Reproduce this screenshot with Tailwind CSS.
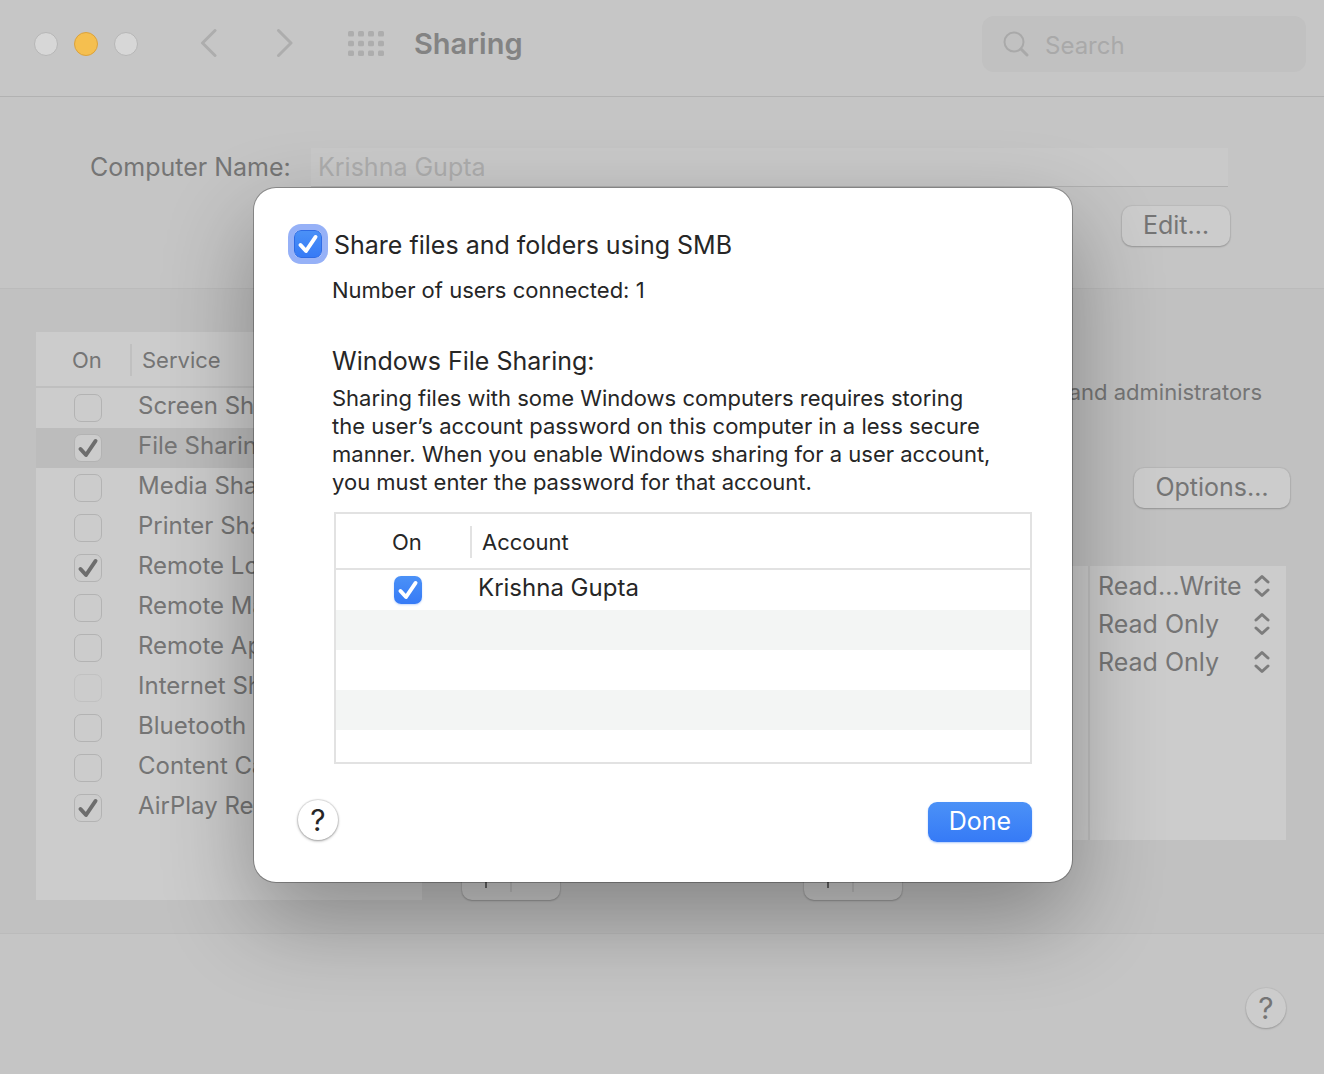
<!DOCTYPE html>
<html lang="en">
<head>
<meta charset="utf-8">
<meta name="viewport" content="width=device-width, initial-scale=1">
<title>Sharing</title>
<script src="https://cdn.jsdelivr.net/npm/@tailwindcss/browser@4"></script>
</head>
<body class="relative flex min-h-screen flex-col overflow-x-hidden bg-[#c5c5c5] font-[Inter,sans-serif] text-[25px] text-[#757575]">

<!-- Toolbar -->
<header class="flex h-[97px] shrink-0 items-start border-b border-[#b2b2b2] bg-[#c6c6c6] pt-4 pr-[18px] pl-[34px]">
  <div class="flex h-14 items-center">
    <div class="flex gap-4">
      <button aria-label="Close" class="size-6 rounded-full border border-[#b6b6b6] bg-[#d7d7d7]"></button>
      <button aria-label="Minimize" class="size-6 rounded-full border border-[#dba23c] bg-[#f5bf4f]"></button>
      <button aria-label="Zoom" class="size-6 rounded-full border border-[#b6b6b6] bg-[#d7d7d7]"></button>
    </div>
    <button aria-label="Back" class="ml-[60px]"><svg class="h-[30px] w-5" viewBox="0 0 20 30" fill="none" stroke="#adadad" stroke-width="3" stroke-linecap="round" stroke-linejoin="round"><path d="M17 1.500 4.500 14 17 26.500"/></svg></button>
    <button aria-label="Forward" class="ml-14"><svg class="h-[30px] w-5" viewBox="0 0 20 30" fill="none" stroke="#adadad" stroke-width="3" stroke-linecap="round" stroke-linejoin="round"><path d="M4.500 1.500 17 14 4.500 26.500"/></svg></button>
    <button aria-label="Show All" class="ml-[54px]"><svg class="h-[26px] w-9" viewBox="0 0 36 26" fill="#adadad"><g id="r"><rect x="0" y="0" width="6" height="5.500" rx="1.500"/><rect x="10" y="0" width="6" height="5.500" rx="1.500"/><rect x="20" y="0" width="6" height="5.500" rx="1.500"/><rect x="30" y="0" width="6" height="5.500" rx="1.500"/></g><use href="#r" y="9.700"/><use href="#r" y="19.400"/></svg></button>
    <h1 class="ml-[30px] text-[29px] leading-8 font-semibold text-[#838383]">Sharing</h1>
  </div>
  <label class="ml-auto flex h-14 w-[324px] items-center gap-4 rounded-xl bg-[#c1c1c1] pl-[21px]">
    <svg class="size-[26px] shrink-0" viewBox="0 0 26 26" fill="none" stroke="#a9a9a9" stroke-linecap="round"><circle cx="11" cy="11" r="9.500" stroke-width="2"/><path d="m18 18 6 6" stroke-width="3"/></svg>
    <input type="text" aria-label="Search" placeholder="Search" class="w-full min-w-0 bg-transparent pt-1 text-2xl text-[#757575] outline-none placeholder:text-[#a9a9a9]">
  </label>
</header>

<!-- Computer name -->
<section class="flex h-48 shrink-0 flex-col border-b border-[#bbbbbb] pt-[51px] pr-[94px] pl-[90px]">
  <div class="mr-[2px] flex h-[39px] items-center">
    <label for="computer-name" class="w-[221px] shrink-0">Computer Name:</label>
    <input id="computer-name" type="text" value="Krishna Gupta" disabled class="h-full min-w-0 flex-1 border-b border-[#b0b0b0] bg-[#c9c9c9] pl-[7px] text-[#adadad]">
  </div>
  <button class="mt-[19px] h-10 w-[108px] self-end rounded-[10px] bg-[#cccccc] shadow-[0_0_1px_1px_rgba(0,0,0,0.05),0_1px_2px_rgba(0,0,0,0.2)]">Edit…</button>
</section>

<!-- Services and file sharing settings -->
<main class="flex h-[645px] shrink-0 gap-10 border-b border-[#bbbbbb] bg-[#c1c1c1] pt-[43px] pb-[33px] pl-9">
  <div class="w-[386px] shrink-0 bg-[#cccccc]">
    <table class="w-full table-fixed border-separate border-spacing-0 text-left">
      <colgroup><col class="w-24"><col></colgroup>
      <thead class="text-[22px]">
        <tr>
          <th class="h-14 border-b-2 border-[#bfbfbf] p-0 pt-[2px] font-normal"><div class="h-8 border-r-2 border-[#c0c0c0] pl-9 leading-8">On</div></th>
          <th class="h-14 border-b-2 border-[#bfbfbf] p-0 pt-[2px] pl-[10px] font-normal">Service</th>
        </tr>
      </thead>
      <tbody id="services" class="text-2xl"></tbody>
    </table>
  </div>

  <div class="flex min-w-0 flex-1 flex-col">
    <p class="mt-[46px] mr-[62px] self-end text-[22px] leading-7 whitespace-nowrap">and administrators</p>
    <button class="mt-[62px] mr-[34px] h-10 w-[156px] self-end rounded-[10px] bg-[#cccccc] shadow-[0_0_1px_1px_rgba(0,0,0,0.05),0_1px_2px_rgba(0,0,0,0.2)]">Options…</button>
    <div class="mt-[58px] mr-[38px] flex h-[274px] gap-5">
      <div class="w-[322px] shrink-0 bg-[#cccccc]"></div>
      <div class="flex min-w-0 flex-1 bg-[#cccccc]">
        <div class="flex-1 border-r-2 border-[#bfbfbf]"></div>
        <div id="permissions" class="w-[196px] shrink-0 pt-[1px]"></div>
      </div>
    </div>
    <div class="mt-5 flex gap-[244px]">
      <div class="flex h-10 w-[98px] shrink-0 items-center rounded-[10px] bg-[#cccccc] shadow-[0_0_1px_1px_rgba(0,0,0,0.05),0_1px_2px_rgba(0,0,0,0.2)]">
        <button aria-label="Add folder" class="flex h-6 flex-1 justify-center border-r-2 border-[#bcbcbc] pt-1"><svg class="size-4" viewBox="0 0 16 16" stroke="#666666" stroke-width="2"><path d="M8 0v16M0 8h16"/></svg></button>
        <button aria-label="Remove folder" class="flex h-6 flex-1 justify-center pt-1"><svg class="size-4" viewBox="0 0 16 16" stroke="#666666" stroke-width="2"><path d="M0 8h16"/></svg></button>
      </div>
      <div class="flex h-10 w-[98px] shrink-0 items-center rounded-[10px] bg-[#cccccc] shadow-[0_0_1px_1px_rgba(0,0,0,0.05),0_1px_2px_rgba(0,0,0,0.2)]">
        <button aria-label="Add user" class="flex h-6 flex-1 justify-center border-r-2 border-[#bcbcbc] pt-1"><svg class="size-4" viewBox="0 0 16 16" stroke="#666666" stroke-width="2"><path d="M8 0v16M0 8h16"/></svg></button>
        <button aria-label="Remove user" class="flex h-6 flex-1 justify-center pt-1"><svg class="size-4" viewBox="0 0 16 16" stroke="#666666" stroke-width="2"><path d="M0 8h16"/></svg></button>
      </div>
    </div>
  </div>
</main>

<footer class="flex justify-end pt-[54px] pr-[38px]">
  <button aria-label="Help" class="flex size-10 items-center justify-center rounded-full bg-[#cccccc] shadow-[0_0_1px_1px_rgba(0,0,0,0.04),0_1px_2px_rgba(0,0,0,0.2)]"><span class="text-[30px] leading-10">?</span></button>
</footer>

<!-- Sharing options sheet -->
<div class="absolute inset-x-0 top-[188px] flex justify-center pl-[2px]">
  <div role="dialog" aria-label="File sharing options" class="w-[818px] rounded-[22px] bg-white pt-9 pr-10 pb-10 pl-[34px] text-[#262626] shadow-[0_0_0_1px_rgba(0,0,0,0.28),0_36px_90px_rgba(0,0,0,0.32)]">
    <div class="flex h-10 items-center gap-3 pl-[6px]">
      <span class="grid size-7 shrink-0">
        <input id="smb" type="checkbox" checked class="col-start-1 row-start-1 size-7 appearance-none rounded-[7px] border border-[#2f6ce5] bg-linear-to-b from-[#4b91f7] to-[#367af6] ring-6 ring-[#96b1f7]">
        <svg class="pointer-events-none col-start-1 row-start-1 size-7" viewBox="0 0 28 28" fill="none" stroke="#fff" stroke-width="4" stroke-linecap="round" stroke-linejoin="round"><path d="m6.500 15 5.500 6 9.500-14"/></svg>
      </span>
      <label for="smb" class="pt-[3px]">Share files and folders using SMB</label>
    </div>
    <div class="pl-11">
      <p class="mt-3 text-[22px] leading-7">Number of users connected: 1</p>
      <h2 class="mt-[37px] leading-10">Windows File Sharing:</h2>
      <p class="mt-[3px] text-[22px] leading-7 whitespace-nowrap">Sharing files with some Windows computers requires storing<br>the user’s account password on this computer in a less secure<br>manner. When you enable Windows sharing for a user account,<br>you must enter the password for that account.</p>
    </div>
    <div class="mt-4 ml-[46px] h-[252px] overflow-hidden border-2 border-[#e2e2e2]">
      <table class="w-full table-fixed border-separate border-spacing-0 text-left">
        <colgroup><col class="w-[136px]"><col></colgroup>
        <thead class="text-[22px]">
          <tr>
            <th class="h-14 border-b-2 border-[#e2e2e2] p-0 pt-[2px] font-normal"><div class="h-8 border-r-2 border-[#e2e2e2] pl-14 leading-8">On</div></th>
            <th class="h-14 border-b-2 border-[#e2e2e2] p-0 pt-[2px] pl-[10px] font-normal">Account</th>
          </tr>
        </thead>
        <tbody class="text-2xl">
          <tr>
            <td class="h-10 p-0 pl-[58px]">
              <span class="grid size-7">
                <input id="account" type="checkbox" checked class="col-start-1 row-start-1 size-7 appearance-none rounded-[7px] bg-linear-to-b from-[#4b91f7] to-[#367af6] shadow-[0_1px_2px_rgba(54,122,246,0.3)]">
                <svg class="pointer-events-none col-start-1 row-start-1 size-7" viewBox="0 0 28 28" fill="none" stroke="#fff" stroke-width="4" stroke-linecap="round" stroke-linejoin="round"><path d="m6.500 15 5.500 6 9.500-14"/></svg>
              </span>
            </td>
            <td class="h-10 p-0 pb-1 pl-[6px] leading-9"><label for="account">Krishna Gupta</label></td>
          </tr>
          <tr><td colspan="2" class="h-10 bg-[#f3f5f4] p-0"></td></tr>
          <tr><td colspan="2" class="h-10 p-0"></td></tr>
          <tr><td colspan="2" class="h-10 bg-[#f3f5f4] p-0"></td></tr>
        </tbody>
      </table>
    </div>
    <div class="mt-9 flex items-start justify-between pl-[10px]">
      <button aria-label="Help" class="flex size-10 items-center justify-center rounded-full bg-white shadow-[0_0_1px_1px_rgba(0,0,0,0.1),0_1px_3px_rgba(0,0,0,0.35)]"><span class="text-[30px] leading-10">?</span></button>
      <button class="mt-[2px] h-10 w-[104px] rounded-[9px] bg-linear-to-b from-[#4b91f7] to-[#367af6] text-white shadow-[0_1px_2px_rgba(54,122,246,0.4)]">Done</button>
    </div>
  </div>
</div>

<script>
  const services = [
    ['Screen Sharing', false], ['File Sharing', true], ['Media Sharing', false],
    ['Printer Sharing', false], ['Remote Login', true], ['Remote Management', false],
    ['Remote Apple Events', false], ['Internet Sharing', false], ['Bluetooth Sharing', false],
    ['Content Caching', false], ['AirPlay Receiver', true],
  ];
  const tick = '<svg class="pointer-events-none col-start-1 row-start-1 size-7" viewBox="0 0 28 28" fill="none" stroke="#6d6d6d" stroke-width="4" stroke-linecap="round" stroke-linejoin="round"><path d="m6.500 15 5.500 6 9.500-14"/></svg>';
  document.getElementById('services').innerHTML = services.map(([name, on], i) => {
    const row = name === 'File Sharing' ? 'bg-[#bcbcbc]' : '';
    const box = name === 'Internet Sharing' ? 'border-[#c1c1c1]' : 'border-[#b3b3b3]';
    return `<tr class="${row}">
      <td class="h-10 p-0 pl-[38px]"><span class="grid size-7">
        <input id="service-${i}" type="checkbox" ${on ? 'checked' : ''} class="col-start-1 row-start-1 size-7 appearance-none rounded-[7px] border bg-[#cccccc] ${box}">${on ? tick : ''}
      </span></td>
      <td class="h-10 p-0 pb-1 pl-[6px] leading-9 whitespace-nowrap"><label for="service-${i}">${name}</label></td>
    </tr>`;
  }).join('');

  const permissions = ['Read…Write', 'Read Only', 'Read Only'];
  document.getElementById('permissions').innerHTML = permissions.map((value, i) => `
    <div class="grid h-[38px] items-center pl-2">
      <select aria-label="Permission ${i + 1}" class="col-start-1 row-start-1 w-full appearance-none bg-transparent leading-9"><option>${value}</option></select>
      <svg class="pointer-events-none col-start-1 row-start-1 mr-4 h-6 w-4 justify-self-end" viewBox="0 0 16 24" fill="none" stroke="#7c7c7c" stroke-width="3" stroke-linecap="round" stroke-linejoin="round"><path d="M2 8 8 2.500 14 8M2 16l6 5.500 6-5.500"/></svg>
    </div>`).join('');
</script>
</body>
</html>
